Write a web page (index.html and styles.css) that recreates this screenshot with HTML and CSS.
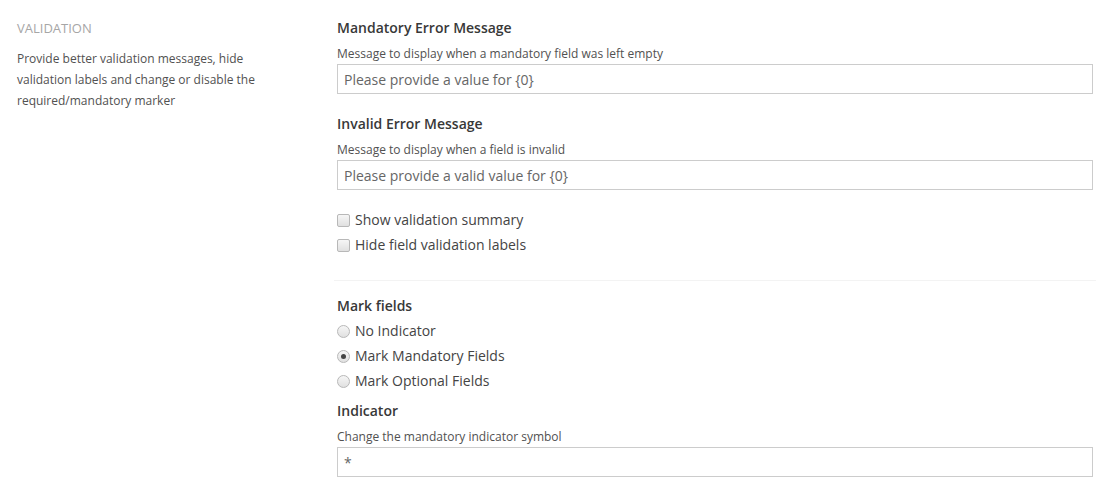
FILE: index.html
```html
<!DOCTYPE html>
<html>
<head>
<meta charset="utf-8">
<link rel="stylesheet" href="styles.css">
</head>
<body>
<div class="group">
  <div class="info">
    <div class="info-title">Validation</div>
    <p class="info-desc">Provide better validation messages, hide validation labels and change or disable the required/mandatory marker</p>
  </div>
  <div class="props">
    <div class="prop">
      <div class="prop-label">Mandatory Error Message</div>
      <div class="prop-desc">Message to display when a mandatory field was left empty</div>
      <input class="text-input" type="text" value="Please provide a value for {0}">
    </div>
    <div class="prop">
      <div class="prop-label">Invalid Error Message</div>
      <div class="prop-desc">Message to display when a field is invalid</div>
      <input class="text-input" type="text" value="Please provide a valid value for {0}">
    </div>
    <div class="checks">
      <label class="opt"><input class="box" type="checkbox"><span>Show validation summary</span></label>
      <label class="opt"><input class="box" type="checkbox"><span>Hide field validation labels</span></label>
    </div>
    <hr class="sep">
    <div class="radios">
      <div class="prop-label">Mark fields</div>
      <label class="opt"><input class="radio" type="radio" name="mark"><span>No Indicator</span></label>
      <label class="opt"><input class="radio" type="radio" name="mark" checked><span>Mark Mandatory Fields</span></label>
      <label class="opt"><input class="radio" type="radio" name="mark"><span>Mark Optional Fields</span></label>
    </div>
    <div class="prop prop-last">
      <div class="prop-label">Indicator</div>
      <div class="prop-desc">Change the mandatory indicator symbol</div>
      <input class="text-input" type="text" value="*">
    </div>
  </div>
</div>
</body>
</html>
```
FILE: styles.css
```css
html, body {
  margin: 0;
  padding: 0;
  background: #fff;
}
body {
  font-family: "Open Sans", "Liberation Sans", sans-serif;
  color: #333;
}
.group {
  display: flex;
  padding: 19px 18px 0 17px;
  gap: 17px;
}
.info {
  width: 303px;
  flex: none;
}
.info-title {
  font-size: 13px;
  line-height: 18px;
  text-transform: uppercase;
  color: #a6a6a6;
}
.info-desc {
  max-width: 245px;
  margin: 11px 0 0;
  font-size: 12px;
  line-height: 21px;
  color: #515151;
}
.props {
  flex: 1;
  display: flex;
  flex-direction: column;
}
.prop {
  display: flex;
  flex-direction: column;
  margin-bottom: 21px;
}
.prop-label {
  font-size: 14px;
  font-weight: 600;
  line-height: 18px;
  color: #383838;
}
.prop-desc {
  font-size: 12px;
  line-height: 16px;
  margin-top: 9px;
  margin-bottom: 2px;
  color: #515151;
}
.text-input {
  box-sizing: border-box;
  height: 30px;
  width: 100%;
  margin: 0;
  border: 1px solid #ccc;
  border-radius: 0;
  padding: 0 6px;
  font-family: inherit;
  font-size: 14px;
  color: #666;
  background: #fff;
  outline: none;
}
.checks {
  display: flex;
  flex-direction: column;
  gap: 7px;
  margin-top: 0;
}
.opt {
  display: flex;
  align-items: center;
  gap: 5px;
  font-size: 14px;
  line-height: 18px;
  color: #444;
}
.box, .radio {
  appearance: none;
  -webkit-appearance: none;
  width: 13px;
  height: 13px;
  margin: 0;
  border: 1px solid #b8b8b8;
  background: linear-gradient(#f6f6f6, #e0e0e0);
  box-sizing: border-box;
  flex: none;
}
.box {
  border-radius: 2px;
}
.radio {
  border-radius: 50%;
  position: relative;
}
.radio:checked::after {
  content: "";
  position: absolute;
  left: 3px;
  top: 3px;
  width: 5px;
  height: 5px;
  border-radius: 50%;
  background: #444;
}
.sep {
  border: 0;
  border-top: 1px solid #f3f3f3;
  margin: 26px -3px 16px -3px;
}
.radios {
  display: flex;
  flex-direction: column;
  gap: 7px;
  margin-bottom: 12px;
}
.prop-last {
  margin-bottom: 0;
}
```
